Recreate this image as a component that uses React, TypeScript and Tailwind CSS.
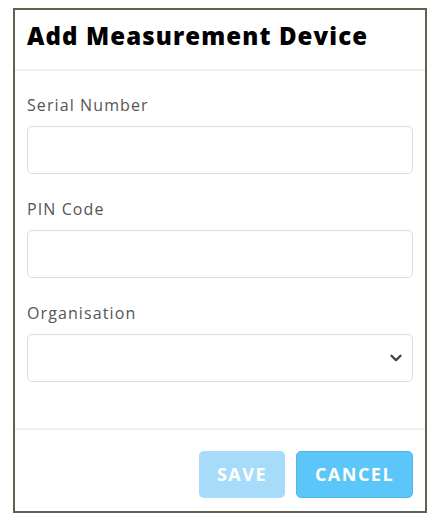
import { ChevronDown } from "lucide-react";

const Field = ({ label, select }: { label: string; select?: boolean }) => {
  return (
    <div className="flex flex-col gap-[11px]">
      <label className="text-[16px] leading-[20px] tracking-[1.1px] text-[#555]">{label}</label>
      <div className="relative h-[48px] w-full rounded-[5px] border border-[#dcdcdc] bg-white">
        {select ? (
          <ChevronDown
            className="absolute right-[7px] top-[14px] text-[#444]"
            size={18}
            strokeWidth={3.2}
          />
        ) : null}
      </div>
    </div>
  );
};

const App = () => {
  return (
    <div className="min-h-[526px] w-[437px] bg-white pt-[8px] pl-[13px] font-['Open_Sans',sans-serif]">
      <div className="flex h-[505px] w-[414px] flex-col border-2 border-[#5b6450] bg-white">
        <div className="h-[61px] border-b-2 border-[#efefef] px-3 pt-[14px]">
          <h1 className="text-[24px] font-extrabold leading-none tracking-[1.1px] text-black">
            Add Measurement Device
          </h1>
        </div>

        <div className="flex flex-1 flex-col gap-[25px] px-3 pt-[24px]">
          <Field label="Serial Number" />
          <Field label="PIN Code" />
          <Field label="Organisation" select />
        </div>

        <div className="flex justify-end gap-[11px] border-t-2 border-[#efefef] px-3 pt-[21px] pb-[13px]">
          <button className="h-[47px] w-[86px] rounded-[5px] bg-[#a6dcfa] text-[18px] font-bold tracking-[1.5px] text-white">
            SAVE
          </button>
          <button className="h-[47px] w-[117px] rounded-[5px] border border-[#4fb6ea] bg-[#5dc6f8] text-[18px] font-bold tracking-[1.5px] text-white">
            CANCEL
          </button>
        </div>
      </div>
    </div>
  );
};

export default App;
